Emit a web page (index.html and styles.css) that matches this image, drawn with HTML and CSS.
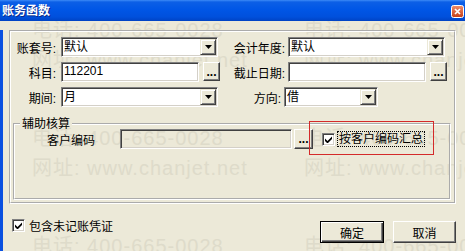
FILE: index.html
```html
<!DOCTYPE html>
<html lang="zh-CN">
<head>
  <meta charset="UTF-8" />
  <title>账务函数</title>
  <link rel="stylesheet" href="styles.css">
</head>
<body>
  <div class="window">
    <div class="watermark">
      <div class="wm-tile"><div>电话: 400-665-0028</div><div>网址: www.chanjet.net</div></div>
      <div class="wm-tile"><div>电话: 400-665-0028</div><div>网址: www.chanjet.net</div></div>
      <div class="wm-tile"><div>电话: 400-665-0028</div><div>网址: www.chanjet.net</div></div>
      <div class="wm-tile"><div>电话: 400-665-0028</div><div>网址: www.chanjet.net</div></div>
      <div class="wm-tile"><div>电话: 400-665-0028</div><div>网址: www.chanjet.net</div></div>
      <div class="wm-tile"><div>电话: 400-665-0028</div><div>网址: www.chanjet.net</div></div>
    </div>

    <div class="titlebar">
      <span class="title">账务函数</span>
      <span class="close-btn">
        <svg width="13" height="13" viewBox="0 0 13 13">
          <defs>
            <linearGradient id="closeFill" x1="0" y1="0" x2="0" y2="1">
              <stop offset="0" stop-color="#ef8f6c"/>
              <stop offset="1" stop-color="#c43d16"/>
            </linearGradient>
          </defs>
          <rect x="0.5" y="0.5" width="12" height="12" rx="2" fill="url(#closeFill)" stroke="#fff"/>
          <path d="M4 4 L9 9 M9 4 L4 9" stroke="#fff" stroke-width="1.7"/>
        </svg>
      </span>
    </div>

    <div class="client">
      <div class="frame">
        <div class="form-grid">
          <label class="lbl">账套号:</label>
          <div class="combo">
            <span class="combo-text">默认</span>
            <span class="drop-btn"><svg width="7" height="4" viewBox="0 0 7 4"><polygon points="0,0 7,0 3.5,4" fill="#000"/></svg></span>
          </div>
          <label class="lbl lbl-r">会计年度:</label>
          <div class="combo">
            <span class="combo-text">默认</span>
            <span class="drop-btn"><svg width="7" height="4" viewBox="0 0 7 4"><polygon points="0,0 7,0 3.5,4" fill="#000"/></svg></span>
          </div>

          <label class="lbl">科目:</label>
          <div class="pick">
            <div class="edit">112201</div>
            <button class="dots">...</button>
          </div>
          <label class="lbl lbl-r">截止日期:</label>
          <div class="pick">
            <div class="edit"></div>
            <button class="dots">...</button>
          </div>

          <label class="lbl">期间:</label>
          <div class="combo">
            <span class="combo-text">月</span>
            <span class="drop-btn"><svg width="7" height="4" viewBox="0 0 7 4"><polygon points="0,0 7,0 3.5,4" fill="#000"/></svg></span>
          </div>
          <label class="lbl lbl-short">方向:</label>
          <div class="combo combo-short">
            <span class="combo-text">借</span>
            <span class="drop-btn"><svg width="7" height="4" viewBox="0 0 7 4"><polygon points="0,0 7,0 3.5,4" fill="#000"/></svg></span>
          </div>
        </div>

        <fieldset class="group">
          <legend>辅助核算</legend>
          <div class="group-row">
            <span class="group-lbl">客户编码</span>
            <div class="edit edit-off"></div>
            <button class="dots dots-tall">...</button>
            <span class="mark">
              <span class="check"><svg width="7" height="7" viewBox="0 0 7 7"><polygon points="0,2.5 2.5,5 7,0.5 7,3 2.5,7.5 0,5" fill="#000"/></svg></span>
              <span class="focus-text">按客户编码汇总</span>
            </span>
          </div>
        </fieldset>
      </div>

      <div class="footer">
        <label class="check-row">
          <span class="check"><svg width="7" height="7" viewBox="0 0 7 7"><polygon points="0,2.5 2.5,5 7,0.5 7,3 2.5,7.5 0,5" fill="#000"/></svg></span>
          包含未记账凭证
        </label>
        <div class="buttons">
          <button class="btn btn-default">确定</button>
          <button class="btn btn-cancel">取消</button>
        </div>
      </div>
    </div>
  </div>
</body>
</html>
```

FILE: styles.css
```css
* {
  box-sizing: border-box;
}

body {
  margin: 0;
  font-family: "Liberation Sans", "Noto Sans CJK SC", sans-serif;
  font-size: 12px;
  color: #000;
}

.window {
  position: relative;
  z-index: 0;
  width: 465px;
  height: 251px;
  background: #ece9d8;
  overflow: hidden;
}

/* 水印 */
.watermark {
  position: absolute;
  z-index: -1;
  left: 32px;
  top: 15px;
  display: grid;
  grid-template-columns: 272px 272px;
  grid-auto-rows: 108px;
  font-size: 20px;
  line-height: 30px;
  letter-spacing: 1px;
  color: #dedbca;
  white-space: nowrap;
}

.titlebar {
  height: 21px;
  display: flex;
  align-items: center;
  justify-content: space-between;
  padding: 0 1px 0 2px;
  background: linear-gradient(to bottom, #3d8af7 0, #0c5fe6 2px, #0056e6 45%, #0050dc 80%, #0043c4 100%);
}

.title {
  color: #fff;
  font-weight: bold;
  line-height: 12px;
  text-shadow: 1px 1px #0b2a8a;
}

.close-btn {
  display: flex;
  margin-top: 1px;
}

.client {
  height: 230px;
  border-left: 3px solid #0a50e0;
  border-bottom: 4px solid #0a4bd6;
}

.frame {
  margin: 9px 9px 0 6px;
  height: 174px;
  border: 2px groove #fff;
  padding: 5px 3px 2px 2px;
}

.form-grid {
  display: grid;
  grid-template-columns: 48px 157px 70px 157px;
  grid-template-rows: repeat(3, 20px);
  row-gap: 5px;
  align-items: center;
}

.lbl {
  text-align: right;
  padding-right: 5px;
  white-space: nowrap;
}

.lbl-r {
  padding-right: 3px;
}

.lbl-short {
  padding-right: 7px;
}

/* 下拉框 / 输入框 */
.combo,
.edit {
  height: 20px;
  background: #fff;
  border: 1px solid;
  border-color: #808080 #fff #fff #808080;
  box-shadow: inset 1px 1px #404040, inset -1px -1px #d4d0c8;
}

.combo {
  display: flex;
  padding: 1px;
}

.combo-short {
  width: 94px;
  margin-left: -4px;
}

.combo-text {
  flex: 1;
  padding-left: 1px;
  line-height: 16px;
}

.drop-btn {
  width: 16px;
  display: flex;
  align-items: center;
  justify-content: center;
  background: #ece9d8;
  border: 1px solid;
  border-color: #ece9d8 #404040 #404040 #ece9d8;
  box-shadow: inset 1px 1px #fff, inset -1px -1px #808080;
}

.pick {
  display: flex;
  width: 159px;
  height: 20px;
}

.pick .edit {
  flex: 1;
}

.edit {
  padding: 0 2px;
  line-height: 16px;
}

.edit-off {
  width: 172px;
  background: transparent;
}

.dots,
.btn {
  font: inherit;
  color: #000;
  padding: 0;
  background: #ece9d8;
  border: 1px solid;
  border-color: #fff #404040 #404040 #fff;
  box-shadow: inset -1px -1px #808080;
}

.dots {
  width: 17px;
  height: 19px;
  margin-left: 4px;
  font-weight: bold;
  line-height: 14px;
}

.dots-tall {
  width: 19px;
  height: 20px;
  margin-left: 2px;
}

/* 辅助核算 */
.group {
  margin: 11px 0 0 0;
  padding: 0;
  min-width: 0;
  height: 82px;
  border: 2px groove #fff;
}

.group legend {
  margin-left: 5px;
  padding: 0 2px;
  line-height: 12px;
}

.group-row {
  display: flex;
  align-items: center;
  height: 20px;
  margin-top: -1px;
}

.group-lbl {
  margin-left: 32px;
  width: 73px;
}

.mark {
  position: relative;
  display: flex;
  align-items: center;
  margin-left: 9px;
}

.mark::after {
  content: "";
  position: absolute;
  left: -13px;
  right: -9px;
  top: -10px;
  bottom: -8px;
  border: 1px solid #d42a2a;
}

.focus-text {
  margin-left: 2px;
  padding: 0 1px;
  line-height: 14px;
  border: 1px dotted #000;
}

.check {
  width: 13px;
  height: 13px;
  display: flex;
  align-items: center;
  justify-content: center;
  background: #fff;
  border: 1px solid;
  border-color: #808080 #fff #fff #808080;
  box-shadow: inset 1px 1px #404040, inset -1px -1px #d4d0c8;
}

/* 底部 */
.footer {
  display: flex;
  justify-content: space-between;
  height: 43px;
  padding: 0 9px;
}

.check-row {
  display: flex;
  align-items: center;
  gap: 4px;
  height: 13px;
  margin-top: 15px;
}

.buttons {
  display: flex;
  gap: 9px;
  margin-top: 17px;
  align-self: flex-start;
}

.btn {
  width: 64px;
  height: 22px;
}

.btn-cancel {
  width: 63px;
}

.btn-default {
  border: 1px solid #000;
  box-shadow: inset 1px 1px #fff, inset -1px -1px #404040, inset -2px -2px #808080;
}
```
